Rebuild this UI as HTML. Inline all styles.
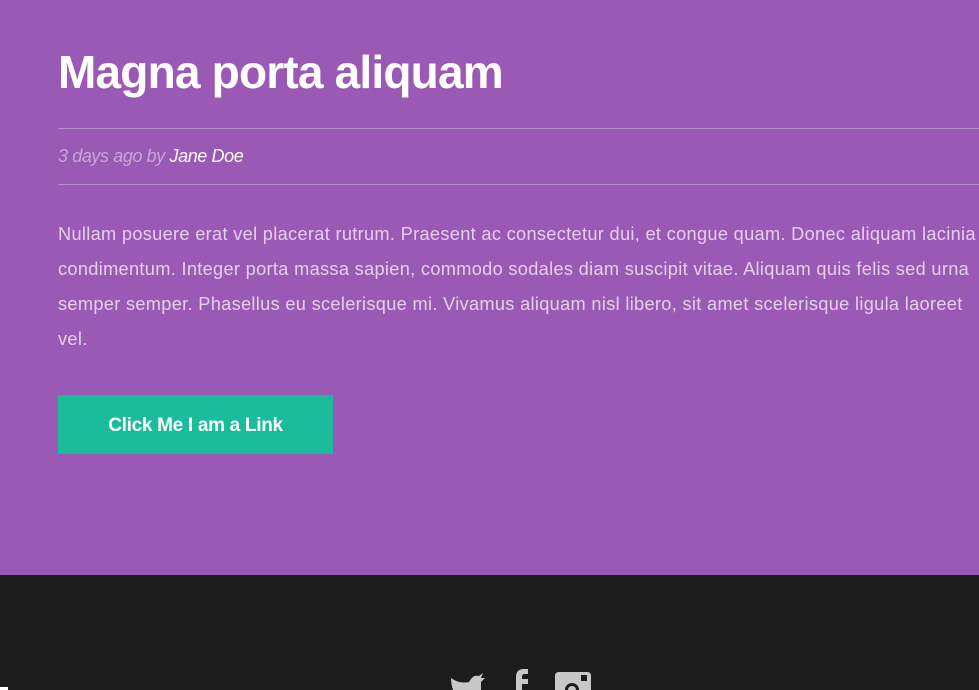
<!DOCTYPE html>
<html><head><style>
body{margin:0;width:979px;height:690px;overflow:hidden;font-family:"Liberation Sans",sans-serif;background:#1c1c1c}
.top{position:absolute;left:0;top:0;width:979px;height:575px;background:#9b59b6}
h1{position:absolute;left:58px;top:45px;margin:0;font-size:46px;font-weight:bold;color:#fff;letter-spacing:-0.8px}
.hr{position:absolute;left:58px;right:0;height:1px;background:#b88bcb}
.meta{position:absolute;left:58px;top:146px;font-size:18px;font-style:italic;color:#c9a6d8;letter-spacing:-0.4px}
.meta span{color:#fff}
p{position:absolute;left:58px;top:217px;width:940px;margin:0;font-size:18.2px;line-height:35px;color:#e3d0ec;letter-spacing:0.32px;white-space:nowrap}
.btn{position:absolute;left:58px;top:395px;width:275px;height:59px;background:#1abc9c;color:#fff;font-weight:bold;font-size:19px;line-height:61px;text-align:center;letter-spacing:-0.3px}
.ic{position:absolute;top:670px;fill:#c8c8c8}
</style></head><body>
<div class="top">
<h1>Magna porta aliquam</h1>
<div class="hr" style="top:128px"></div>
<div class="meta">3 days ago by <span>Jane Doe</span></div>
<div class="hr" style="top:184px"></div>
<p>Nullam posuere erat vel placerat rutrum. Praesent ac consectetur dui, et congue quam. Donec aliquam lacinia<br>condimentum. Integer porta massa sapien, commodo sodales diam suscipit vitae. Aliquam quis felis sed urna<br>semper semper. Phasellus eu scelerisque mi. Vivamus aliquam nisl libero, sit amet scelerisque ligula laoreet<br>vel.</p>
<div class="btn">Click Me I am a Link</div>
</div>
<svg class="ic" style="left:449px" width="36" height="20"><path d="M2 8 Q10 14 20 12 Q24 4 30 6 L34 3 L32 8 L36 8 L32 12 L32 20 L4 20 Q2 14 2 8Z"/></svg>
<svg class="ic" style="left:509px;top:668px" width="22" height="22"><path d="M7 22 V9 Q7 1 15 1 L19 1 V6 L15 6 Q13 6 13 9 V11 H19 V16 H13 V22Z"/></svg>
<svg class="ic" style="left:555px;top:672px" width="36" height="18"><path d="M4 0 H32 Q36 0 36 4 V18 H0 V4 Q0 0 4 0Z"/><rect x="26" y="3" width="6" height="6" fill="#1c1c1c"/><circle cx="17" cy="18" r="7" fill="#1c1c1c"/><circle cx="17" cy="18" r="4"/></svg>
<div style="position:absolute;left:0;top:687px;width:8px;height:3px;background:#fff"></div>
</body></html>
